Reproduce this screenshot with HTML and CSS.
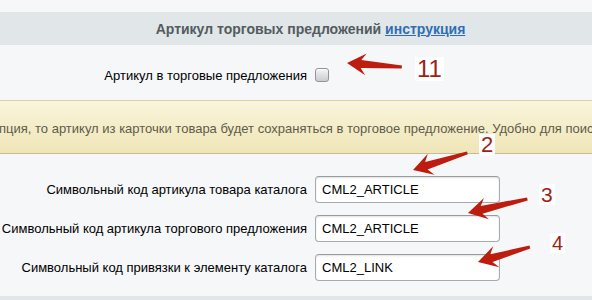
FILE: index.html
```html
<!DOCTYPE html>
<html lang="ru">
<head>
<meta charset="utf-8">
<title>Артикул торговых предложений</title>
<link rel="stylesheet" href="styles.css">
</head>
<body>
<div class="page">
  <div class="header">
    <span class="header-title">Артикул торговых предложений <a class="header-link" href="#">инструкция</a></span>
  </div>
  <div class="form-row check-row">
    <label class="form-label" for="sku">Артикул в торговые предложения</label>
    <div class="form-control"><span class="checkbox" id="sku"></span></div>
  </div>
  <div class="note">
    <span class="note-text">пция, то артикул из карточки товара будет сохраняться в торговое предложение. Удобно для поис</span>
  </div>
  <div class="fields">
    <div class="form-row">
      <label class="form-label">Символьный код артикула товара каталога</label>
      <div class="form-control"><input class="text-input" type="text" value="CML2_ARTICLE"></div>
    </div>
    <div class="form-row">
      <label class="form-label">Символьный код артикула торгового предложения</label>
      <div class="form-control"><input class="text-input" type="text" value="CML2_ARTICLE"></div>
    </div>
    <div class="form-row">
      <label class="form-label">Символьный код привязки к элементу каталога</label>
      <div class="form-control"><input class="text-input" type="text" value="CML2_LINK"></div>
    </div>
  </div>
  <div class="footer"></div>

  <svg class="annotations" width="592" height="300" viewBox="0 0 592 300">
    <polygon class="arrow" transform="translate(347 63) rotate(4.2)" points="0,0 19,-11 14,-4 55,-1.5 55,1.5 14,4 19,11"/>
    <polygon class="arrow" transform="translate(413 170) rotate(-17.5)" points="0,0 19,-11 14,-4 57,-1.5 57,1.5 14,4 19,11"/>
    <polygon class="arrow" transform="translate(468 213) rotate(-13.3)" points="0,0 19,-11 14,-4 61,-1.5 61,1.5 14,4 19,11"/>
    <polygon class="arrow" transform="translate(478 262) rotate(-16.1)" points="0,0 19,-11 14,-4 54,-1.5 54,1.5 14,4 19,11"/>
  </svg>
  <span class="mark mark-11">11</span>
  <span class="mark mark-2">2</span>
  <span class="mark mark-3">3</span>
  <span class="mark mark-4">4</span>
</div>
</body>
</html>
```
FILE: styles.css
```css
html, body {
  margin: 0;
  padding: 0;
}
body {
  background: #f5f7f9;
  font-family: "Liberation Sans", Arial, sans-serif;
  font-size: 13px;
  color: #000;
  width: 592px;
  height: 300px;
  overflow: hidden;
}
.page {
  position: relative;
  width: 592px;
  height: 300px;
  padding-top: 12px;
  box-sizing: border-box;
  display: flex;
  flex-direction: column;
}
.header {
  height: 33px;
  background: #e1e6e8;
  display: flex;
  align-items: center;
  justify-content: center;
  padding-left: 29px;
}
.header-title {
  font-weight: bold;
  font-size: 14px;
  color: #535b60;
}
.header-link {
  color: #2f6eb5;
  text-decoration: underline;
}
.form-row {
  display: grid;
  grid-template-columns: 307px 1fr;
  column-gap: 8px;
  align-items: center;
}
.form-label {
  text-align: right;
  white-space: nowrap;
}
.check-row {
  height: 55px;
  padding-top: 5px;
  box-sizing: border-box;
}
.checkbox {
  display: block;
  width: 12px;
  height: 12px;
  border: 1px solid #8e9499;
  border-radius: 3px;
  background: linear-gradient(#f3f4f5, #c9cdd0);
  box-shadow: inset 0 1px 0 #fff;
}
.note {
  height: 49px;
  border-top: 1px solid #d8d0aa;
  border-bottom: 1px solid #c4bd9d;
  background: linear-gradient(#faf5dc, #efe5b6);
  display: flex;
  align-items: center;
  padding-top: 3px;
  box-sizing: content-box;
  overflow: hidden;
  white-space: nowrap;
}
.note-text {
  color: #5f5b4a;
  margin-left: -1px;
}
.fields {
  display: flex;
  flex-direction: column;
  gap: 12px;
  padding-top: 22px;
}
.text-input {
  display: block;
  width: 185px;
  height: 27px;
  box-sizing: border-box;
  border: 1px solid #a6abae;
  border-top-color: #979ca0;
  border-radius: 4px;
  background: #fff;
  box-shadow: inset 0 1px 2px rgba(0, 0, 0, 0.12);
  font-family: "Liberation Sans", Arial, sans-serif;
  font-size: 13px;
  color: #000;
  padding: 0 6px;
  margin: 0;
}
.footer {
  margin-top: auto;
  height: 4px;
  background: #e1e6e8;
}
.annotations {
  position: absolute;
  left: 0;
  top: 0;
  pointer-events: none;
}
.arrow {
  fill: #bd1d0e;
}
.mark {
  position: absolute;
  font-family: "Liberation Sans", Arial, sans-serif;
  line-height: 1;
  color: #a11e16;
  background: #fff;
  padding: 0 2px;
}
.mark-11 { font-size: 24px; left: 415px; top: 57px; }
.mark-2 { font-size: 22px; left: 479px; top: 134px; }
.mark-3 { font-size: 21px; left: 539px; top: 184px; }
.mark-4 { font-size: 20px; left: 550px; top: 233px; }
```
